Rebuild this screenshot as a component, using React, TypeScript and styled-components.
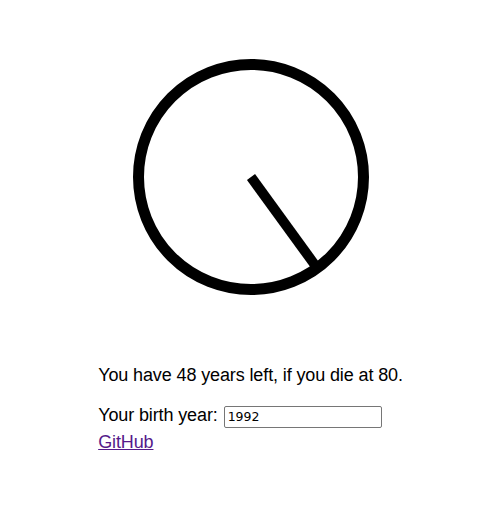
import React from "react";
import styled, { createGlobalStyle } from "styled-components";

const Global = createGlobalStyle`
  html, body { margin: 0; padding: 0; background: #fff; }
  body { font-family: "Liberation Sans", Arial, sans-serif; color: #000; }
`;

const Page = styled.main`
  display: flex;
  flex-direction: column;
  align-items: center;
  padding-top: 57px;
`;

const Clock = styled.svg`
  display: block;
  width: 240px;
  height: 240px;
`;

const Info = styled.section`
  margin-top: 67px;
  font-size: 18px;
  line-height: 22px;
  letter-spacing: -0.12px;
`;

const Message = styled.p`
  margin: 0 0 18px;
`;

const Row = styled.div`
  display: flex;
  align-items: baseline;
  gap: 6px;
`;

const YearInput = styled.input`
  box-sizing: border-box;
  width: 158px;
  height: 22px;
  padding: 1px 3px;
  font-family: "DejaVu Sans", sans-serif;
  font-size: 12.5px;
  letter-spacing: 0;
  border: 1px solid #767676;
  border-radius: 2px;
`;

const Link = styled.a`
  color: #551a8b;
  text-decoration: underline;
  display: block;
  margin-top: 3px;
`;

export default function App() {
  const birth = 1992;
  const life = 80;
  const lived = 2024 - birth;
  const left = life - lived;
  const angle = (lived / life) * 2 * Math.PI;
  const cx = 120;
  const cy = 120;
  const len = 108;
  const x2 = cx + Math.sin(angle) * len;
  const y2 = cy - Math.cos(angle) * len;
  return (
    <>
      <Global />
      <Page>
        <Clock viewBox="0 0 240 240">
          <circle cx={cx} cy={cy} r={112.5} fill="none" stroke="#000" strokeWidth={11} />
          <line x1={cx} y1={cy} x2={x2} y2={y2} stroke="#000" strokeWidth={10} />
        </Clock>
        <Info>
          <Message>You have {left} years left, if you die at {life}.</Message>
          <Row>
            <label htmlFor="year">Your birth year:</label>
            <YearInput id="year" defaultValue={String(birth)} />
          </Row>
          <Link href="#">GitHub</Link>
        </Info>
      </Page>
    </>
  );
}
